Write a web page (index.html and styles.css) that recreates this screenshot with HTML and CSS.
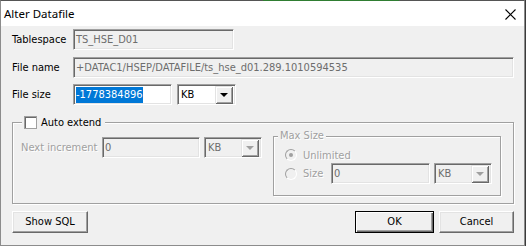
FILE: index.html
```html
<!DOCTYPE html>
<html>
<head>
    <meta charset="utf-8" />
    <title>Alter Datafile</title>
    <link rel="stylesheet" href="styles.css">
</head>
<body>
    <div class="dialog">
        <div class="titlebar">
            <span class="title">Alter Datafile</span>
            <span class="close">
                <svg width="11" height="11" viewBox="0 0 11 11">
                    <path d="M0.5 0.5 L10.5 10.5 M10.5 0.5 L0.5 10.5" stroke="#000" stroke-width="1.1" fill="none" />
                </svg>
            </span>
        </div>

        <div class="client">
            <div class="row">
                <span class="label">Tablespace</span>
                <div class="edit disabled w-tablespace">TS_HSE_D01</div>
            </div>

            <div class="row row-gap7">
                <span class="label">File name</span>
                <div class="edit disabled w-filename">+DATAC1/HSEP/DATAFILE/ts_hse_d01.289.1010594535</div>
            </div>

            <div class="row row-gap6">
                <span class="label">File size</span>
                <div class="edit w-size"><span class="selected">-1778384896</span></div>
                <div class="combo w-combo-main">
                    <span class="combo-text">KB</span>
                    <span class="drop"><span class="arrow"></span></span>
                </div>
            </div>

            <div class="group">
                <div class="group-legend">
                    <span class="check"></span>
                    <span>Auto extend</span>
                </div>

                <div class="group-left">
                    <div class="row">
                        <span class="label-grey inc-label">Next increment</span>
                        <div class="edit disabled w-inc">0</div>
                        <div class="combo disabled w-combo">
                            <span class="combo-text">KB</span>
                            <span class="drop"><span class="arrow"></span></span>
                        </div>
                    </div>
                </div>

                <div class="maxsize">
                    <div class="maxsize-legend">Max Size</div>
                    <div class="radio-row">
                        <span class="radio checked"></span>
                        <span class="label-grey">Unlimited</span>
                    </div>
                    <div class="radio-row size-row">
                        <span class="radio"></span>
                        <span class="label-grey size-label">Size</span>
                        <div class="edit disabled w-maxsize">0</div>
                        <div class="combo disabled w-combo">
                            <span class="combo-text">KB</span>
                            <span class="drop"><span class="arrow"></span></span>
                        </div>
                    </div>
                </div>
            </div>

            <div class="buttons">
                <div class="button w-sql">Show SQL</div>
                <div class="spacer"></div>
                <div class="button default w-ok">OK</div>
                <div class="button w-cancel">Cancel</div>
            </div>
        </div>
    </div>
</body>
</html>
```

FILE: styles.css
```css
html, body {
    margin: 0;
    padding: 0;
    height: 100%;
    background-color: #3b3b3b;
}

body {
    font-family: "DejaVu Sans Condensed", "DejaVu Sans", sans-serif;
    font-size: 11px;
    color: #000;
}

.dialog {
    position: relative;
    width: 525px;
    height: 246px;
    box-sizing: border-box;
    border: 1px solid #8c8c8c;
    border-top-color: #555;
    background-color: #f0f0f0;
    display: flex;
    flex-direction: column;
}

.dialog::before {
    content: "";
    position: absolute;
    top: -1px;
    left: 262px;
    width: 136px;
    height: 1px;
    background-color: #2f7d32;
}

.titlebar {
    height: 25px;
    background-color: #fff;
    display: flex;
    align-items: center;
    padding-left: 3px;
}

.title {
    font-family: "Noto Sans", "Open Sans", sans-serif;
    font-size: 11.5px;
    padding-bottom: 1px;
}

.close {
    margin-left: auto;
    margin-right: 8px;
    width: 11px;
    height: 11px;
    display: flex;
    margin-top: 1px;
}

.client {
    padding: 3px 0 0 11px;
    display: flex;
    flex-direction: column;
}

.row {
    display: flex;
    align-items: center;
    height: 21px;
}

.row-gap7 {
    margin-top: 7px;
}

.row-gap6 {
    margin-top: 6px;
}

.label {
    width: 61px;
}

.label-grey {
    color: #a0a0a0;
    text-shadow: 1px 1px 0 #fff;
}

.inc-label {
    width: 81px;
    white-space: nowrap;
}

.edit {
    height: 21px;
    box-sizing: border-box;
    border: 1px solid;
    border-color: #a0a0a0 #fff #fff #a0a0a0;
    box-shadow: inset 1px 1px 0 #696969, inset -1px -1px 0 #e3e3e3;
    background-color: #fff;
    padding: 0 0 0 2px;
    display: flex;
    align-items: center;
    white-space: nowrap;
    overflow: hidden;
}

.edit.disabled {
    background-color: #f0f0f0;
    color: #6d6d6d;
}

.selected {
    background-color: #0078d7;
    color: #fff;
    padding: 1px 0 2px;
}

.w-tablespace { width: 161px; }
.w-filename { width: 441px; }
.w-size { width: 99px; }
.w-inc { width: 98px; }
.w-maxsize { width: 99px; }

.combo {
    height: 21px;
    box-sizing: border-box;
    border: 1px solid;
    border-color: #a0a0a0 #fff #fff #a0a0a0;
    box-shadow: inset 1px 1px 0 #696969, inset -1px -1px 0 #e3e3e3;
    background-color: #fff;
    display: flex;
    align-items: center;
    padding: 2px 2px 2px 3px;
    margin-left: 5px;
}

.combo.disabled {
    background-color: #f0f0f0;
    color: #6d6d6d;
    margin-left: 4px;
}

.w-combo-main { width: 59px; }
.w-combo { width: 58px; }

.combo-text {
    flex: 1;
}

.drop {
    width: 17px;
    height: 17px;
    box-sizing: border-box;
    background-color: #f0f0f0;
    border-top: 1px solid #e3e3e3;
    border-left: 1px solid #e3e3e3;
    box-shadow: inset 1px 1px 0 #fff, inset -1px -1px 0 #a0a0a0, 1px 1px 0 #696969;
    display: flex;
    align-items: center;
    justify-content: center;
    margin-right: 1px;
}

.arrow {
    width: 0;
    height: 0;
    border-left: 4px solid transparent;
    border-right: 4px solid transparent;
    border-top: 4px solid #000;
}

.combo.disabled .arrow {
    border-top-color: #a0a0a0;
}

.group {
    position: relative;
    margin-top: 17px;
    width: 502px;
    height: 82px;
    box-sizing: border-box;
    border: 1px solid #a0a0a0;
    box-shadow: 1px 1px 0 #fff, inset 1px 1px 0 #fff;
    padding: 14px 12px 7px 8px;
    display: flex;
}

.group-legend {
    position: absolute;
    top: -8px;
    left: 9px;
    padding: 0 4px 0 2px;
    background-color: #f0f0f0;
    display: flex;
    align-items: center;
    gap: 4px;
    height: 14px;
}

.check {
    width: 13px;
    height: 13px;
    box-sizing: border-box;
    border: 1px solid #a0a0a0;
    box-shadow: inset 1px 1px 0 #696969;
    background-color: #fff;
}

.group-left {
    display: flex;
    flex-direction: column;
}

.maxsize {
    position: relative;
    margin-left: auto;
    margin-top: -1px;
    width: 228px;
    height: 60px;
    box-sizing: border-box;
    border: 1px solid #a0a0a0;
    box-shadow: 1px 1px 0 #fff, inset 1px 1px 0 #fff;
    padding: 11px 0 0 11px;
    display: flex;
    flex-direction: column;
}

.maxsize-legend {
    position: absolute;
    top: -8px;
    left: 4px;
    padding: 0 2px;
    background-color: #f0f0f0;
    color: #a0a0a0;
    text-shadow: 1px 1px 0 #fff;
    line-height: 14px;
}

.radio-row {
    display: flex;
    align-items: center;
    height: 14px;
}

.size-row {
    height: 21px;
    margin-top: 1px;
}

.radio {
    width: 12px;
    height: 12px;
    box-sizing: border-box;
    border-radius: 50%;
    border: 1px solid #a0a0a0;
    border-right-color: #fff;
    border-bottom-color: #fff;
    background-color: #f0f0f0;
    margin-right: 6px;
    display: flex;
    align-items: center;
    justify-content: center;
}

.radio.checked::after {
    content: "";
    width: 4px;
    height: 4px;
    border-radius: 50%;
    background-color: #a0a0a0;
}

.size-label {
    width: 28px;
}

.buttons {
    display: flex;
    margin-top: 7px;
    width: 502px;
    gap: 5px;
}

.spacer {
    flex: 1;
}

.button {
    height: 22px;
    box-sizing: border-box;
    border: 1px solid;
    border-color: #fff #696969 #696969 #fff;
    box-shadow: inset -1px -1px 0 #a0a0a0, inset 1px 1px 0 #e3e3e3;
    background-color: #f0f0f0;
    display: flex;
    align-items: center;
    justify-content: center;
    padding-bottom: 1px;
}

.w-sql { width: 76px; }
.w-ok { width: 79px; }
.w-cancel { width: 75px; }

.button.default {
    border: 1px solid #000;
    box-shadow: inset 1px 1px 0 #fff, inset -1px -1px 0 #696969, inset -2px -2px 0 #a0a0a0;
}
```
